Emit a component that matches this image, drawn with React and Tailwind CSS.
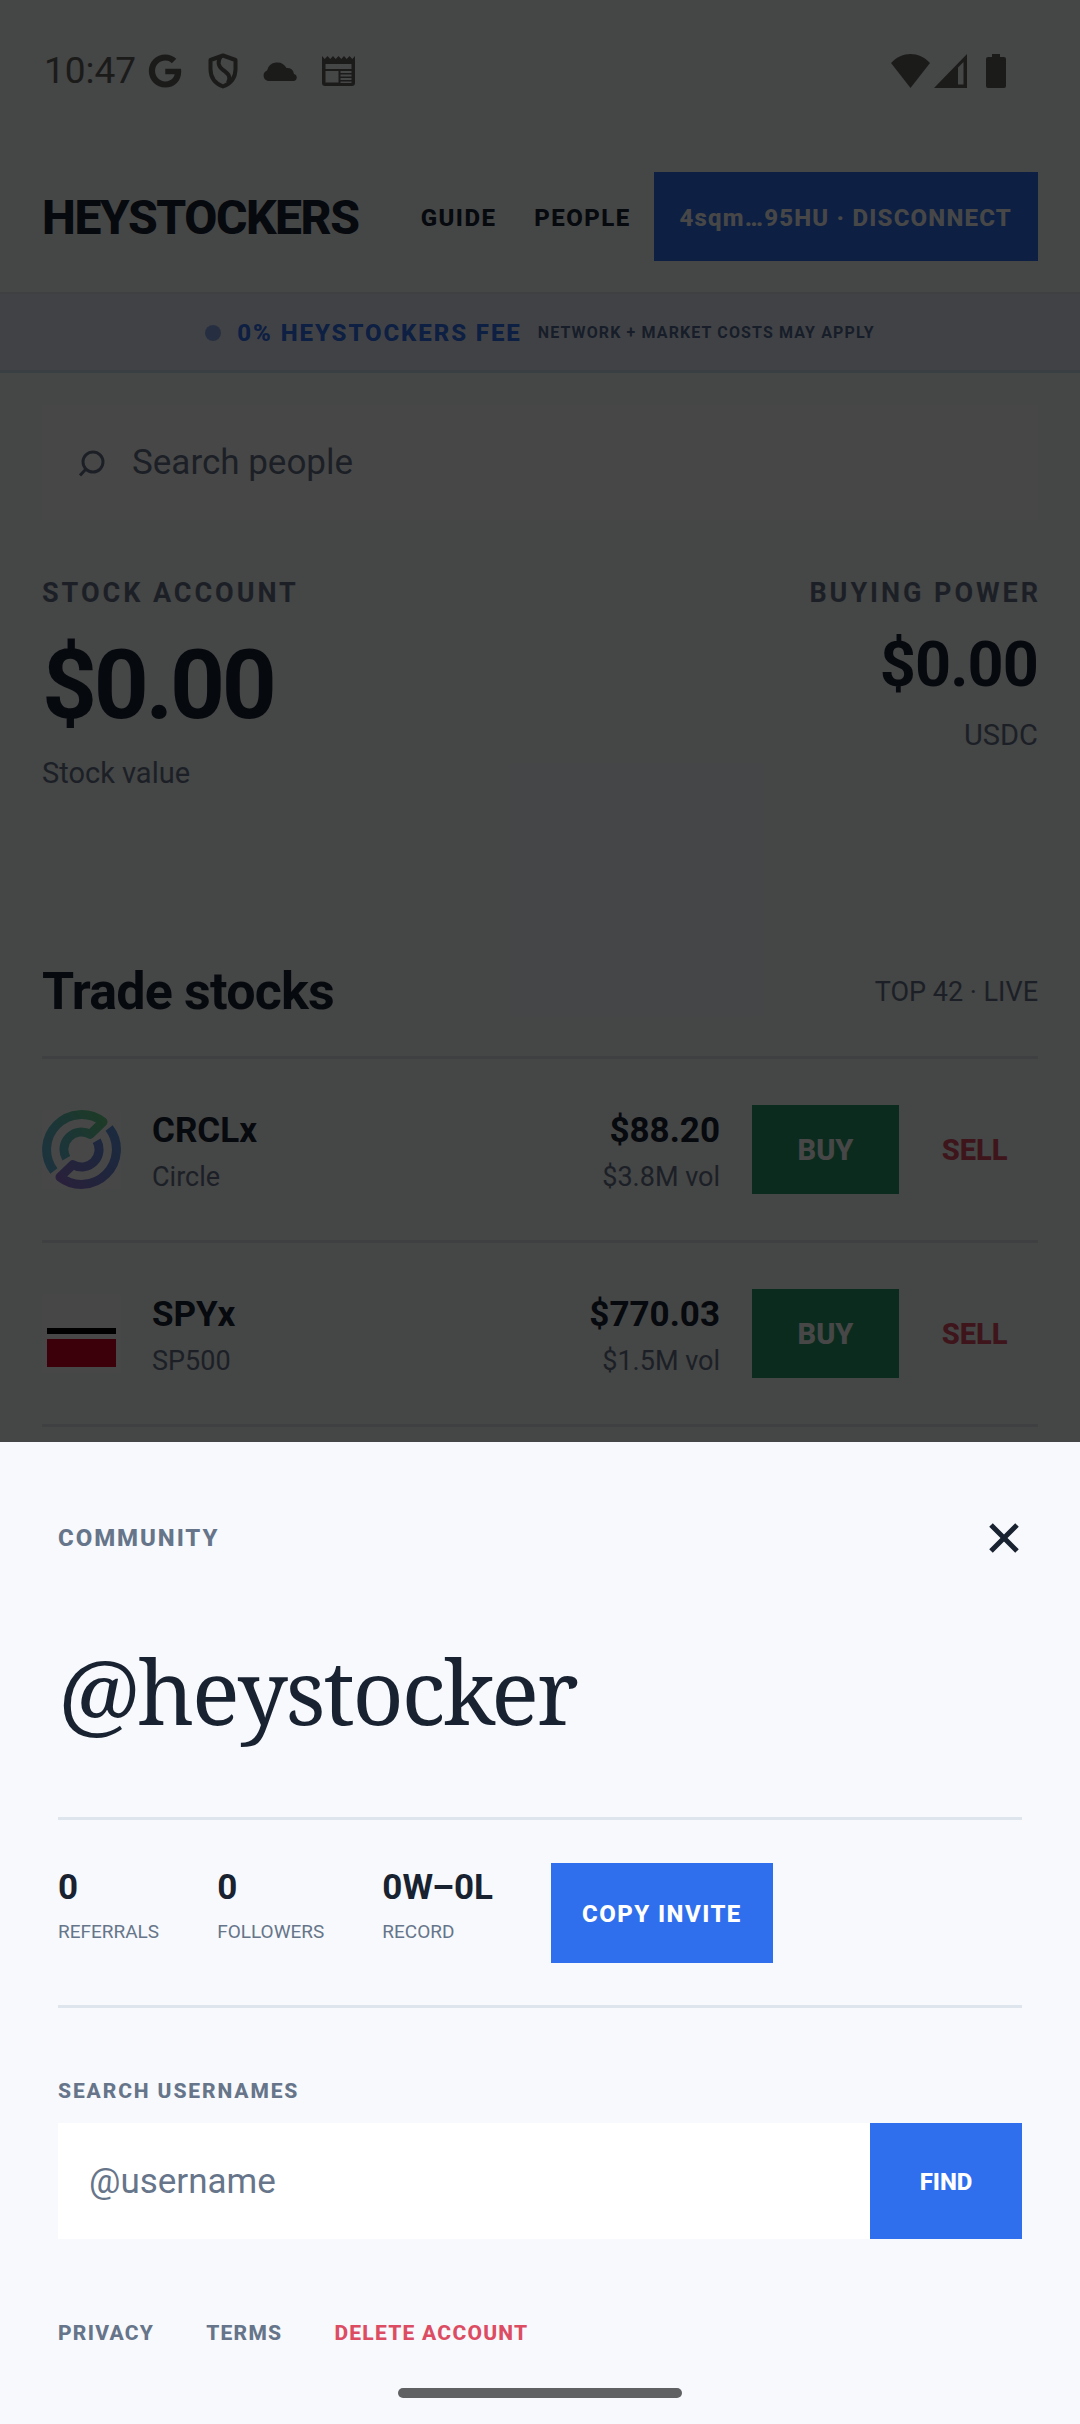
import { useState } from "react";
import { FaGoogle } from "react-icons/fa";

const stocks = [
  { symbol: "CRCLx", name: "Circle", price: "$88.20", volume: "$3.8M vol", Logo: CircleLogo },
  { symbol: "SPYx", name: "SP500", price: "$770.03", volume: "$1.5M vol", Logo: Sp500Logo },
];

const stats = [
  { label: "REFERRALS", value: "0" },
  { label: "FOLLOWERS", value: "0" },
  { label: "RECORD", value: "0W–0L" },
];

function CircleLogo() {
  return (
    <svg viewBox="0 0 79 79" className="size-[79px] bg-white" aria-hidden="true">
      <defs>
        <linearGradient id="circle-top" x1="0" y1="60" x2="62" y2="12" gradientUnits="userSpaceOnUse">
          <stop offset="0" stopColor="#68b5e0" />
          <stop offset="0.5" stopColor="#66c0c4" />
          <stop offset="1" stopColor="#68d28e" />
        </linearGradient>
        <linearGradient id="circle-bottom" x1="79" y1="20" x2="18" y2="72" gradientUnits="userSpaceOnUse">
          <stop offset="0" stopColor="#5f9be0" />
          <stop offset="0.5" stopColor="#7185d8" />
          <stop offset="1" stopColor="#9676d6" />
        </linearGradient>
      </defs>
      <g fill="none" strokeWidth="9" strokeLinejoin="round">
        <path
          stroke="url(#circle-top)"
          d="M11.9 61 A35 35 0 0 1 61 11.9 L48.2 24.3 A17.500 17.500 0 0 0 24.3 48.2"
        />
        <path
          stroke="url(#circle-bottom)"
          d="M67.1 18 A35 35 0 0 1 18 67.1 L30.8 54.7 A17.500 17.500 0 0 0 54.7 30.8"
        />
      </g>
    </svg>
  );
}

function Sp500Logo() {
  return (
    <svg viewBox="0 0 79 79" className="size-[79px] bg-white" aria-hidden="true">
      <rect x="5" y="34" width="69" height="6" fill="#000" />
      <rect x="5" y="45" width="69" height="28" fill="#d6002a" />
    </svg>
  );
}

function StatusBar() {
  return (
    <div className="flex h-[141px] items-center justify-between pr-[74px] pl-[44px] text-[#60635f]">
      <div className="flex items-center">
        <span className="w-[104px] text-[37px]">10:47</span>
        <FaGoogle className="mr-[26px] size-[34px]" />
        <svg viewBox="0 0 30 36" className="mr-6 h-9 w-[30px]" fill="none" stroke="currentColor" strokeWidth="4">
          <path d="M15 2.500 L27.500 7 V16 C27.500 24 23 30.500 15 33.500 C7 30.500 2.500 24 2.500 16 V7 Z" strokeLinejoin="round" />
          <path d="M13 3 C9 9 10 13 15 17 C21 21 23 24 20 30" />
        </svg>
        <svg viewBox="0 0 36 20" className="mr-6 h-5 w-9" fill="currentColor">
          <path d="M6 20 A5.500 5.500 0 0 1 5 9.500 A10.500 10.500 0 0 1 24.500 7 A6.500 6.500 0 0 1 32 13 A3.600 3.600 0 0 1 32 20 Z" />
        </svg>
        <svg viewBox="0 0 33 30" className="h-[30px] w-[33px]" fill="currentColor" fillRule="evenodd">
          <path d="M0 0 L2.750 3 L5.500 0 L8.250 3 L11 0 L13.750 3 L16.500 0 L19.250 3 L22 0 L24.750 3 L27.500 0 L30.250 3 L33 0 V27 A3 3 0 0 1 30 30 H3 A3 3 0 0 1 0 27 Z M3.500 8 V13 H29.500 V8 Z M3.500 15 V26.500 H16.500 V15 Z M18.500 15 V17 H29.500 V15 Z M18.500 18.500 V20.500 H29.500 V18.500 Z M18.500 22 V24 H29.500 V22 Z M18.500 25.500 V27 H29.500 V25.500 Z" />
        </svg>
      </div>
      <div className="flex items-center">
        <svg viewBox="0 0 39 34" className="mr-1 h-[34px] w-[39px]" fill="currentColor">
          <path d="M0 9 C11 -3 28 -3 39 9 L19.500 34 Z" />
        </svg>
        <svg viewBox="0 0 33 34" className="mr-[19px] h-[34px] w-[33px]" fill="currentColor" fillRule="evenodd">
          <path d="M33 0 V34 H0 Z M24 13.500 V30.500 H29.500 V8 Z" />
        </svg>
        <svg viewBox="0 0 20 34" className="h-[34px] w-5" fill="currentColor">
          <path d="M6 0 H14 V3 H18 A2 2 0 0 1 20 5 V32 A2 2 0 0 1 18 34 H2 A2 2 0 0 1 0 32 V5 A2 2 0 0 1 2 3 H6 Z" />
        </svg>
      </div>
    </div>
  );
}

function Header() {
  return (
    <header className="flex items-center border-b-2 border-[#e2e7ee] px-[42px] py-[31px]">
      <h1 className="pt-[2px] text-[48px] leading-none font-extrabold tracking-[-0.03em]">HEYSTOCKERS</h1>
      <nav className="ml-auto flex gap-[38px] pt-[2px] pr-[23px] text-[24px] font-extrabold tracking-[0.06em]">
        <a href="#guide">GUIDE</a>
        <a href="#people">PEOPLE</a>
      </nav>
      <button type="button" className="h-[89px] bg-[#2f6fed] px-[26px] pt-[2px] text-[24px] font-extrabold tracking-wider text-white">
        4sqm…95HU · DISCONNECT
      </button>
    </header>
  );
}

function FeeBanner() {
  return (
    <div className="flex h-[79px] items-center justify-center border-b-3 border-[#cfe3f5] bg-[#eaedf8] pt-[2px]">
      <span className="mr-4 size-4 rounded-full bg-[#8aa9e8]" />
      <strong className="mr-4 text-[24px] font-extrabold tracking-[0.08em] text-[#2f6fed]">0% HEYSTOCKERS FEE</strong>
      <span className="text-[16px] font-bold tracking-[0.07em] text-[#526c94]">NETWORK + MARKET COSTS MAY APPLY</span>
    </div>
  );
}

function PeopleSearch() {
  return (
    <div className="mt-8 flex h-[115px] items-center bg-white pt-[2px] pl-[37px] text-[#66758a]">
      <svg viewBox="0 0 26 27" className="h-[27px] w-[26px]" fill="none" stroke="currentColor" strokeWidth="3">
        <circle cx="14" cy="12" r="10" />
        <path d="M7 19 L1 25.500" />
      </svg>
      <input
        type="search"
        aria-label="Search people"
        placeholder="Search people"
        className="ml-[27px] min-w-0 flex-1 bg-transparent text-[35px] outline-none placeholder:text-[#66758a]"
      />
    </div>
  );
}

function AccountSummary() {
  return (
    <section className="mt-[57px] flex justify-between text-[#66758a]">
      <div>
        <h2 className="text-[27px] leading-8 font-bold tracking-[0.11em]">STOCK ACCOUNT</h2>
        <p className="mt-5 text-[96px] leading-[112px] font-bold tracking-[-0.035em] text-[#182230]">$0.00</p>
        <p className="mt-[14px] text-[29px] leading-9">Stock value</p>
      </div>
      <div className="text-right">
        <h2 className="-mr-[3px] text-[27px] leading-8 font-bold tracking-[0.11em]">BUYING POWER</h2>
        <p className="mt-5 text-[63px] leading-[72px] font-bold tracking-[-0.015em] text-[#182230]">$0.00</p>
        <p className="mt-4 text-[29px] leading-9">USDC</p>
      </div>
    </section>
  );
}

function StockRow({ stock }) {
  const { symbol, name, price, volume, Logo } = stock;
  return (
    <li className="flex items-center border-b-3 border-[#e2e7ee] py-[46px]">
      <Logo />
      <div className="ml-[31px] pt-1">
        <p className="text-[35px] leading-10 font-bold text-[#182230]">{symbol}</p>
        <p className="mt-[10px] text-[27px] leading-8">{name}</p>
      </div>
      <div className="mr-8 ml-auto pt-1 text-right">
        <p className="text-[35px] leading-10 font-bold text-[#182230]">{price}</p>
        <p className="mt-[10px] text-[27px] leading-8">{volume}</p>
      </div>
      <button type="button" className="h-[89px] w-[147px] bg-[#269a69] pt-[2px] text-[29px] font-extrabold text-white">
        BUY
      </button>
      <button type="button" className="h-[89px] w-[139px] pt-[2px] pr-1 pl-4 text-center text-[29px] font-extrabold text-[#dc4d63]">
        SELL
      </button>
    </li>
  );
}

function CommunitySheet({ onClose }) {
  const [username, setUsername] = useState("");

  return (
    <section role="dialog" aria-label="Community" className="bg-[#f7f9fc] px-[58px] pt-[66px] text-[#66758a]">
      <div className="flex h-[60px] items-center justify-between">
        <h2 className="text-[24px] font-extrabold tracking-[0.08em]">COMMUNITY</h2>
        <button type="button" aria-label="Close" onClick={onClose} className="pr-[3px] text-[#182230]">
          <svg viewBox="0 0 30 30" className="size-[30px]" stroke="currentColor" strokeWidth="5">
            <path d="M2 2 L28 28 M28 2 L2 28" />
          </svg>
        </button>
      </div>

      <p className="mt-[62px] font-['Noto_Serif','DejaVu_Serif',serif] text-[89px] leading-[122px] tracking-tight text-[#182230]">
        @heystocker
      </p>

      <div className="mt-[65px] flex border-y-3 border-[#dfe5ec] pt-[43px] pb-[42px]">
        {stats.map((stat) => (
          <div key={stat.label} className="mr-[58px] pt-[5px]">
            <p className="text-[35px] leading-10 font-bold text-[#182230]">{stat.value}</p>
            <p className="mt-3 text-[19px] leading-6">{stat.label}</p>
          </div>
        ))}
        <button type="button" className="h-[100px] bg-[#2f6fed] px-[31px] pt-[2px] text-[24px] font-extrabold tracking-[0.06em] text-white">
          COPY INVITE
        </button>
      </div>

      <form className="mt-[69px]" onSubmit={(e) => e.preventDefault()}>
        <label htmlFor="username" className="block text-[21px] leading-7 font-extrabold tracking-[0.09em]">
          SEARCH USERNAMES
        </label>
        <div className="mt-[18px] flex h-[116px]">
          <input
            id="username"
            type="text"
            value={username}
            onChange={(e) => setUsername(e.target.value)}
            placeholder="@username"
            className="min-w-0 flex-1 bg-white px-[31px] pt-[2px] text-[35px] outline-none placeholder:text-[#66758a]"
          />
          <button type="submit" className="w-[152px] bg-[#2f6fed] pt-[2px] text-[24px] font-extrabold text-white">
            FIND
          </button>
        </div>
      </form>

      <div className="mt-20 flex gap-[52px] text-[21px] leading-7 font-extrabold tracking-[0.06em]">
        <a href="#privacy">PRIVACY</a>
        <a href="#terms">TERMS</a>
        <a href="#delete" className="text-[#dc4d63]">
          DELETE ACCOUNT
        </a>
      </div>

      <div className="mx-auto mt-[41px] mb-[26px] h-[10px] w-[284px] rounded-full bg-[#606163]" />
    </section>
  );
}

export default function App() {
  const [sheetOpen, setSheetOpen] = useState(true);

  return (
    <div className="relative min-h-screen bg-[#f7f9fc] font-['Roboto',sans-serif] text-[#182230]">
      <StatusBar />
      <Header />
      <FeeBanner />
      <main className="px-[42px] text-[#66758a]">
        <PeopleSearch />
        <AccountSummary />
        <section className="mt-[169px]">
          <div className="flex items-center justify-between border-b-3 border-[#e2e7ee] pb-8">
            <h2 className="text-[52px] leading-[64px] font-bold tracking-[-0.015em] text-[#182230]">Trade stocks</h2>
            <span className="text-[27px]">TOP 42 · LIVE</span>
          </div>
          <ul>
            {stocks.map((stock) => (
              <StockRow key={stock.symbol} stock={stock} />
            ))}
          </ul>
        </section>
      </main>

      {sheetOpen && (
        <div className="absolute inset-0 flex flex-col justify-end bg-black/72">
          <CommunitySheet onClose={() => setSheetOpen(false)} />
        </div>
      )}
    </div>
  );
}
